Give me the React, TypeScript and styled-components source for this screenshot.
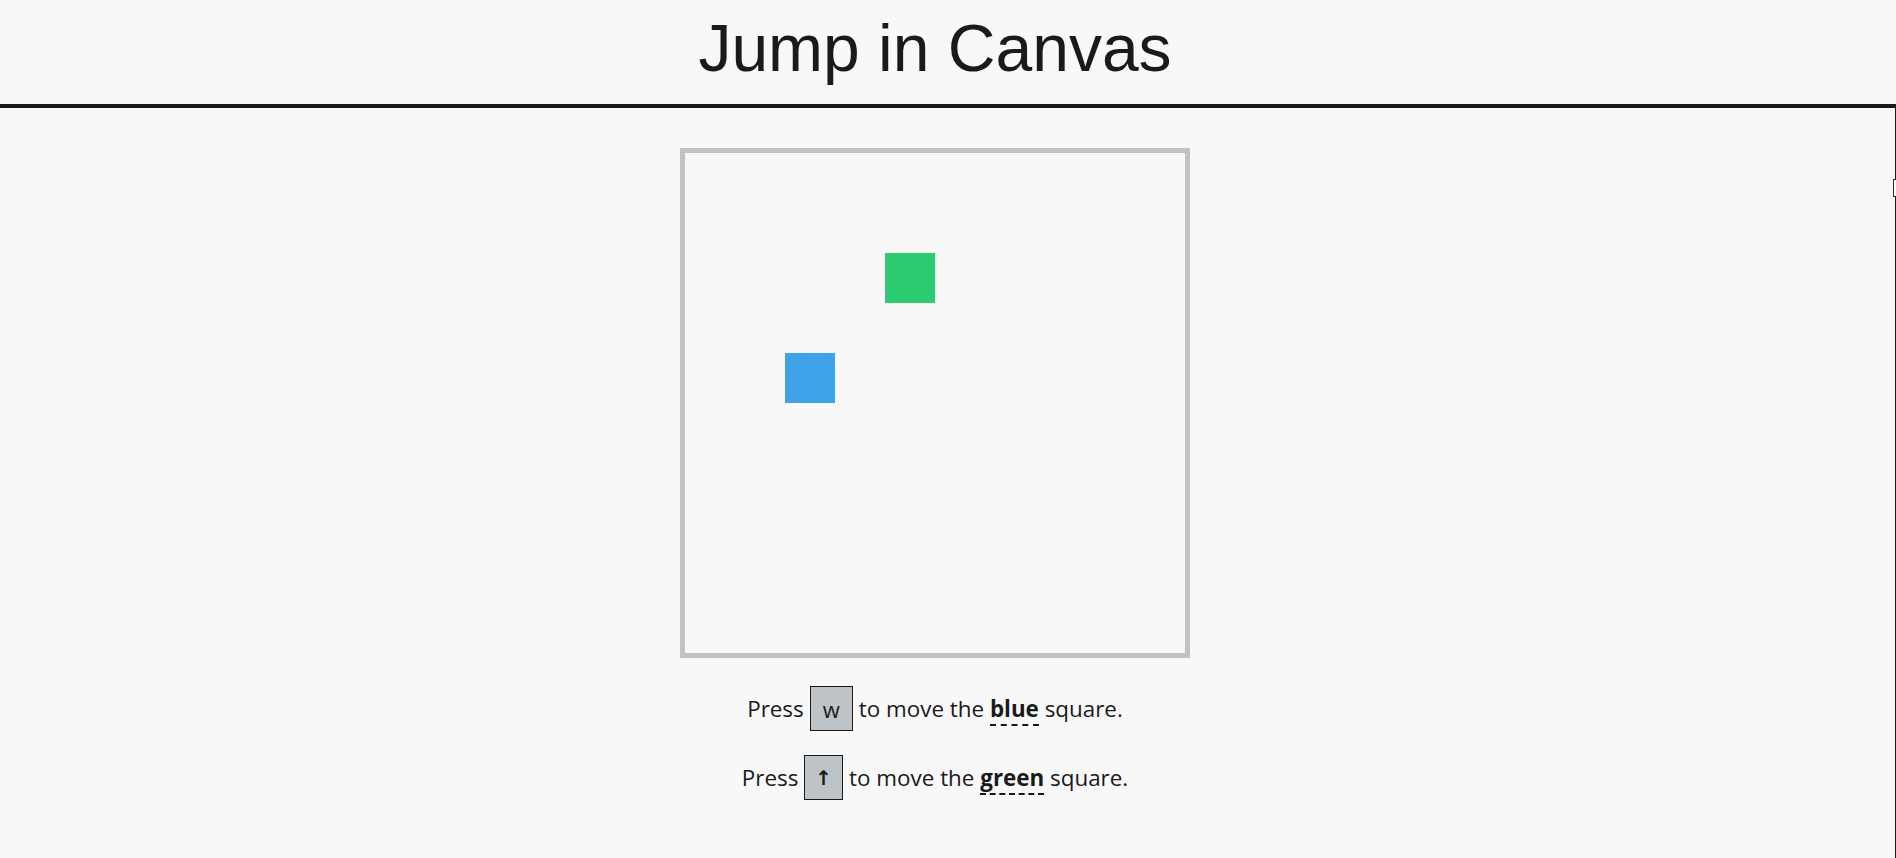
import React from "react";
import styled, { createGlobalStyle } from "styled-components";

const Global = createGlobalStyle`
  html, body {
    margin: 0;
    padding: 0;
    background: #f8f8f8;
    color: #1a1a1a;
    overflow: hidden;
  }
  body {
    font-family: "Open Sans", "Noto Sans", sans-serif;
  }
`;

const Page = styled.div`
  width: 1870px;
  display: flex;
  flex-direction: column;
  align-items: center;
`;

const Header = styled.header`
  align-self: flex-start;
  width: 1895px;
  box-sizing: border-box;
  padding: 10px 0 18px;
  border-bottom: 4px solid #1a1a1a;
  display: flex;
  justify-content: flex-start;
`;

const HeaderInner = styled.div`
  width: 1870px;
  display: flex;
  justify-content: center;
`;

const Title = styled.h1`
  margin: 0;
  font-family: "Liberation Sans", Arial, sans-serif;
  font-weight: normal;
  font-size: 66px;
  line-height: 76px;
  color: #1a1a1a;
`;

const Board = styled.div`
  position: relative;
  margin-top: 40px;
  width: 500px;
  height: 500px;
  border: 5px solid #bdc3c7;
`;

const Square = styled.div<{ $color: string }>`
  position: absolute;
  width: 50px;
  height: 50px;
  background: ${(p) => p.$color};
`;

const Instructions = styled.div`
  margin-top: 28px;
  display: flex;
  flex-direction: column;
  align-items: center;
  gap: 24px;
`;

const Line = styled.p`
  margin: 0;
  font-size: 22.4px;
  line-height: 30px;
  display: flex;
  align-items: center;
  gap: 6px;
`;

const Key = styled.kbd<{ $arrow?: boolean }>`
  display: inline-block;
  box-sizing: border-box;
  height: 45px;
  padding: 7px ${(p) => (p.$arrow ? "10px" : "12px")};
  background: #bdc3c7;
  border: 1px solid #1a1a1a;
  font-family: ${(p) =>
    p.$arrow ? '"DejaVu Sans", sans-serif' : '"Open Sans", "Noto Sans", sans-serif'};
  font-size: ${(p) => (p.$arrow ? "20px" : "22px")};
  line-height: 30px;
  font-weight: ${(p) => (p.$arrow ? 700 : 400)};
`;

const Term = styled.strong`
  font-weight: 700;
  border-bottom: 2px dashed #1a1a1a;
  line-height: 24px;
`;

const EdgePanel = styled.aside`
  position: fixed;
  top: 104px;
  bottom: 0;
  left: 1895px;
  width: 40px;
  border-left: 1px solid #1a1a1a;
`;

const EdgeTab = styled.div`
  position: absolute;
  top: 75px;
  left: -3px;
  width: 20px;
  height: 16px;
  border: 1px solid #2a2a3a;
  background: #f8f8f8;
`;

export default function App() {
  return (
    <>
      <Global />
      <Page>
        <Header>
          <HeaderInner>
            <Title>Jump in Canvas</Title>
          </HeaderInner>
        </Header>
        <Board>
          <Square $color="#3ea3e9" style={{ left: 100, top: 200 }} />
          <Square $color="#2ecc71" style={{ left: 200, top: 100 }} />
        </Board>
        <Instructions>
          <Line>
            <span>Press</span>
            <Key>w</Key>
            <span>
              to move the <Term>blue</Term> square.
            </span>
          </Line>
          <Line>
            <span>Press</span>
            <Key $arrow>↑</Key>
            <span>
              to move the <Term>green</Term> square.
            </span>
          </Line>
        </Instructions>
      </Page>
      <EdgePanel>
        <EdgeTab />
      </EdgePanel>
    </>
  );
}
